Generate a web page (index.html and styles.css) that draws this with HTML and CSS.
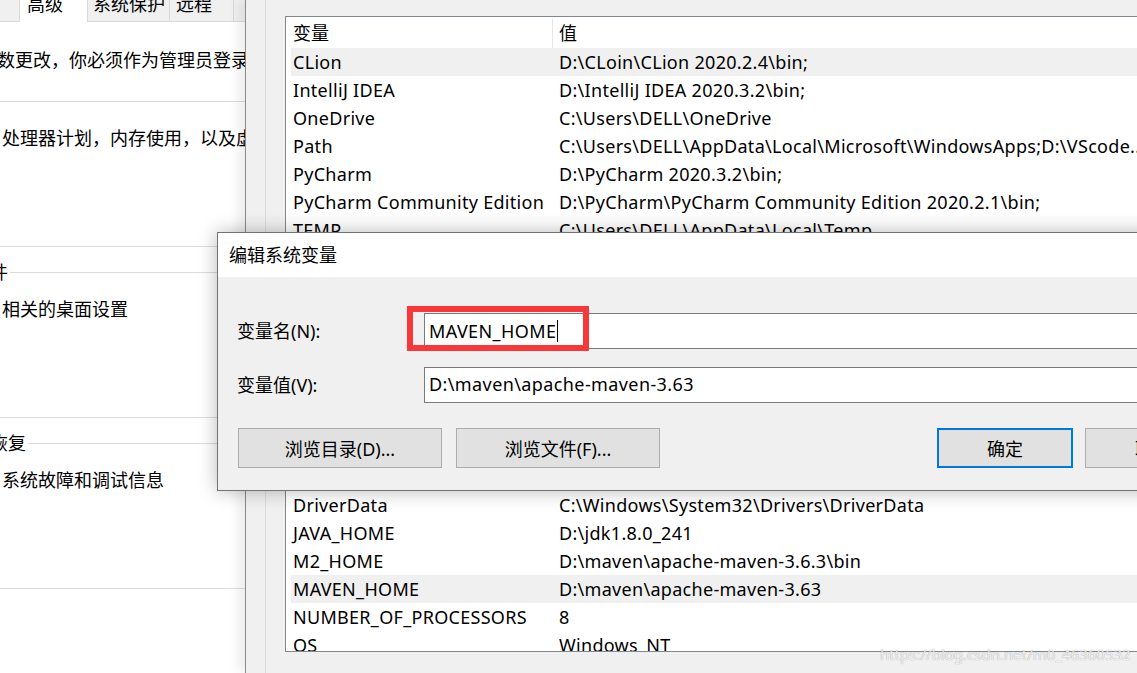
FILE: index.html
```html
<!DOCTYPE html>
<html lang="zh-CN">
<head>
<meta charset="utf-8">
<title>编辑系统变量</title>
<link rel="stylesheet" href="styles.css">
</head>
<body>
<div class="desktop">

  <section class="win win-sys">
    <div class="tabs">
      <div class="tab tab-lead"></div>
      <div class="tab tab-active">高级</div>
      <div class="tab tab-protect">系统保护</div>
      <div class="tab tab-remote">远程</div>
      <div class="tab-rest"></div>
    </div>
    <div class="sys-body">
      <p class="sys-note">要进行大多数更改，你必须作为管理员登录。</p>
      <div class="group">
        <span class="group-title">性能</span>
        <p class="group-text">视觉效果，处理器计划，内存使用，以及虚拟内存</p>
      </div>
      <div class="group">
        <span class="group-title">用户配置文件</span>
        <p class="group-text">与登录帐户相关的桌面设置</p>
      </div>
      <div class="group">
        <span class="group-title">启动和故障恢复</span>
        <p class="group-text">系统启动、系统故障和调试信息</p>
      </div>
    </div>
  </section>

  <section class="win win-env">
    <div class="env-group env-group-user">
      <div class="list list-user">
        <div class="list-head">
          <div class="head-cell head-name">变量</div>
          <div class="head-cell head-value">值</div>
        </div>
        <div class="row hl"><span class="cell">CLion</span><span class="cell">D:\CLoin\CLion 2020.2.4\bin;</span></div>
        <div class="row"><span class="cell">IntelliJ IDEA</span><span class="cell">D:\IntelliJ IDEA 2020.3.2\bin;</span></div>
        <div class="row"><span class="cell">OneDrive</span><span class="cell">C:\Users\DELL\OneDrive</span></div>
        <div class="row"><span class="cell">Path</span><span class="cell">C:\Users\DELL\AppData\Local\Microsoft\WindowsApps;D:\VScode...</span></div>
        <div class="row"><span class="cell">PyCharm</span><span class="cell">D:\PyCharm 2020.3.2\bin;</span></div>
        <div class="row"><span class="cell">PyCharm Community Edition</span><span class="cell">D:\PyCharm\PyCharm Community Edition 2020.2.1\bin;</span></div>
        <div class="row"><span class="cell">TEMP</span><span class="cell">C:\Users\DELL\AppData\Local\Temp</span></div>
        <div class="row"><span class="cell">TMP</span><span class="cell">C:\Users\DELL\AppData\Local\Temp</span></div>
      </div>
    </div>
    <div class="env-group env-group-sys">
      <div class="list list-sys">
        <div class="list-head">
          <div class="head-cell head-name">变量</div>
          <div class="head-cell head-value">值</div>
        </div>
        <div class="row"><span class="cell">ComSpec</span><span class="cell">C:\Windows\system32\cmd.exe</span></div>
        <div class="row"><span class="cell">DriverData</span><span class="cell">C:\Windows\System32\Drivers\DriverData</span></div>
        <div class="row"><span class="cell">JAVA_HOME</span><span class="cell">D:\jdk1.8.0_241</span></div>
        <div class="row"><span class="cell">M2_HOME</span><span class="cell">D:\maven\apache-maven-3.6.3\bin</span></div>
        <div class="row hl"><span class="cell">MAVEN_HOME</span><span class="cell">D:\maven\apache-maven-3.63</span></div>
        <div class="row"><span class="cell">NUMBER_OF_PROCESSORS</span><span class="cell">8</span></div>
        <div class="row"><span class="cell">OS</span><span class="cell">Windows_NT</span></div>
      </div>
    </div>
  </section>

  <section class="dialog">
    <header class="dialog-title">编辑系统变量</header>
    <div class="dialog-body">
      <div class="field">
        <label class="field-label">变量名(N):</label>
        <div class="field-input"><span class="caret-text">MAVEN_HOME</span></div>
      </div>
      <div class="field">
        <label class="field-label">变量值(V):</label>
        <div class="field-input">D:\maven\apache-maven-3.63</div>
      </div>
      <div class="buttons">
        <button class="btn btn-wide">浏览目录(D)...</button>
        <button class="btn btn-wide btn-second">浏览文件(F)...</button>
        <button class="btn btn-ok">确定</button>
        <button class="btn btn-cancel">取消</button>
      </div>
    </div>
    <div class="highlight-box"></div>
  </section>

  <div class="watermark">https://blog.csdn.net/m0_46360532</div>
</div>
</body>
</html>
```

FILE: styles.css
```css
* { box-sizing: border-box; }

html, body {
  margin: 0;
  padding: 0;
  width: 1137px;
  height: 673px;
  overflow: hidden;
  background: #ffffff;
}

body {
  font-family: "Noto Sans", "Noto Sans CJK SC", sans-serif;
  font-size: 18px;
  color: #000000;
}

.desktop {
  position: relative;
  width: 1137px;
  height: 673px;
  overflow: hidden;
}

.win {
  position: absolute;
  top: 0;
}

/* ---------- System properties window (left) ---------- */
.win-sys {
  left: 0;
  width: 245px;
  height: 673px;
  background: #ffffff;
  overflow: hidden;
}

.tabs {
  display: flex;
  height: 27px;
  margin-top: -5px;
  background: #f0f0f0;
  border-bottom: 1px solid #d9d9d9;
  line-height: 18px;
  white-space: nowrap;
}

.tab { height: 26px; }

.tab-lead { width: 19px; }

.tab-active {
  width: 69px;
  height: 27px;
  margin-bottom: -1px;
  padding-left: 7px;
  background: #ffffff;
  border-left: 1px solid #d9d9d9;
  border-right: 1px solid #d9d9d9;
}

.tab-protect {
  width: 82px;
  padding-left: 5px;
  border-right: 1px solid #d9d9d9;
}

.tab-remote {
  width: 64px;
  padding-left: 6px;
  border-right: 1px solid #d9d9d9;
}

.tab-rest { flex: 1; }

.sys-body {
  margin-left: -110px;
  width: 420px;
  padding-top: 29px;
}

.sys-note {
  margin: 0;
  padding-left: 17px;
  line-height: 18px;
  white-space: nowrap;
}

.group {
  position: relative;
  height: 146px;
  margin: 25px 0 0 2px;
  padding: 27px 0 0 19px;
  border: 1px solid #dcdcdc;
}

.sys-note + .group { margin-top: 32px; }

.group-title {
  position: absolute;
  top: -10px;
  left: 4px;
  padding: 0 2px 0 3px;
  background: #ffffff;
  line-height: 18px;
  white-space: nowrap;
}

.group-text {
  margin: 0;
  line-height: 18px;
  white-space: nowrap;
}

/* ---------- Environment variables window (right) ---------- */
.win-env {
  left: 245px;
  width: 1000px;
  height: 673px;
  padding-left: 19px;
  background: #f0f0f0;
  border-left: 1px solid #8a8a8a;
  box-shadow: -7px 0 10px rgba(0, 0, 0, 0.07);
}

.env-group {
  border: 1px solid #dcdcdc;
  border-right: none;
  padding-left: 19px;
}

.env-group-user {
  margin-top: -30px;
  padding-top: 45px;
  padding-bottom: 48px;
}

.env-group-sys {
  margin-top: 25px;
  padding-top: 55px;
  padding-bottom: 60px;
}

.list {
  width: 920px;
  padding-left: 5px;
  background: #ffffff;
  border: 1px solid #828790;
  overflow: hidden;
}

.list-user { height: 285px; }
.list-sys { height: 221px; }

.list-head {
  display: flex;
  height: 31px;
  padding-top: 2px;
  line-height: 29px;
}

.head-name {
  width: 262px;
  padding-left: 2px;
  border-right: 1px solid #e5e5e5;
}

.head-value { padding-left: 6px; }

.row {
  display: grid;
  grid-template-columns: 266px 1fr;
  height: 28px;
  line-height: 28px;
  white-space: nowrap;
  letter-spacing: 0.3px;
}

.row.hl { background: #f0f0f0; }

.cell { padding-left: 2px; overflow: hidden; }

/* ---------- Edit dialog ---------- */
.dialog {
  position: absolute;
  left: 217px;
  top: 232px;
  width: 1050px;
  height: 259px;
  border: 1px solid #737373;
  background: #f0f0f0;
  box-shadow: 0 0 18px rgba(0, 0, 0, 0.28);
}

.dialog-title {
  height: 44px;
  padding-left: 11px;
  line-height: 44px;
  background: #ffffff;
}

.dialog-body {
  height: 213px;
  padding: 36px 0 0 19px;
}

.field {
  display: flex;
  align-items: center;
  height: 36px;
}

.field + .field { margin-top: 18px; }

.field-label {
  width: 187px;
  line-height: 18px;
}

.field-input {
  width: 800px;
  height: 36px;
  padding-left: 4px;
  line-height: 33px;
  background: #ffffff;
  border: 1px solid #7a7a7a;
  white-space: nowrap;
  letter-spacing: 0.4px;
}

.caret-text {
  display: inline-block;
  line-height: 22px;
  padding-right: 1px;
  border-right: 1px solid #000000;
  vertical-align: middle;
  margin-top: -3px;
}

.buttons {
  display: flex;
  margin-top: 25px;
  padding-left: 1px;
}

.btn {
  height: 40px;
  padding: 0;
  font: inherit;
  color: #000000;
  background: #e1e1e1;
  border: 1px solid #adadad;
  white-space: nowrap;
}

.btn-wide { width: 204px; }
.btn-second { margin-left: 14px; }

.btn-ok {
  width: 136px;
  margin-left: 277px;
  border: 2px solid #0078d7;
}

.btn-cancel {
  width: 136px;
  margin-left: 12px;
}

.highlight-box {
  position: absolute;
  left: 189px;
  top: 73px;
  width: 182px;
  height: 45px;
  border: 6px solid #f83838;
}

.watermark {
  position: absolute;
  left: 880px;
  top: 643px;
  font-size: 15px;
  line-height: 22px;
  color: rgba(255, 255, 255, 0.88);
  text-shadow: 0 0 1px rgba(0, 0, 0, 0.45);
  white-space: nowrap;
}
```
